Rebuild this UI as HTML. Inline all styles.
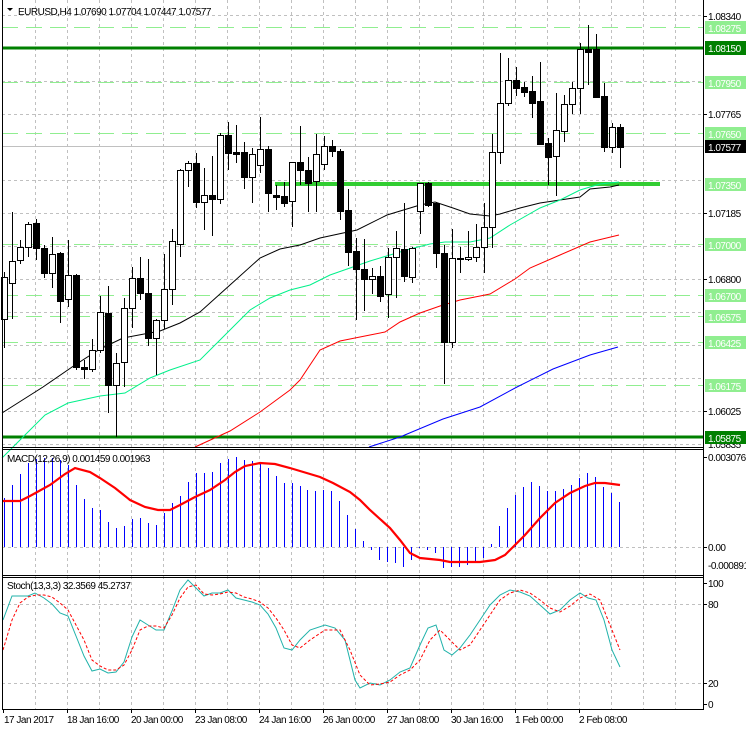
<!DOCTYPE html>
<html><head><meta charset="utf-8"><style>
html,body{margin:0;padding:0;background:#fff;}
svg{display:block;font-family:"Liberation Sans",sans-serif;}
text{font-size:10px;letter-spacing:-0.5px;}
</style></head><body>
<svg width="746" height="731" viewBox="0 0 746 731" xmlns="http://www.w3.org/2000/svg">
<rect width="746" height="731" fill="#fff"/>
<g stroke="#c0c0c0" stroke-dasharray="3,3" stroke-width="1">
<path d="M35.5 0V709M67.5 0V709M99.5 0V709M131.5 0V709M163.5 0V709M195.5 0V709M227.5 0V709M259.5 0V709M291.5 0V709M323.5 0V709M355.5 0V709M387.5 0V709M419.5 0V709M451.5 0V709M483.5 0V709M515.5 0V709M547.5 0V709M579.5 0V709M611.5 0V709M643.5 0V709M675.5 0V709"/>
<path d="M2 15.5H703M2 114.5H703M2 213.5H703M2 246.5H703M2 279.5H703M2 312.5H703M2 345.5H703M2 378.5H703M2 411.5H703M2 444.5H703M2 180.5H703M2 81.5H703"/>
<path d="M2 547.5H703M2 604.5H703M2 683.5H703"/>
</g>
<g stroke="#90ee90" stroke-width="1" stroke-dasharray="16,8">
<path d="M2 27.5H703M2 82.5H703M2 133.5H703M2 244.5H703M2 295.5H703M2 316.5H703M2 342.5H703M2 385.5H703"/>
</g>
<path d="M2 146.5H703" stroke="#c0c0c0" stroke-width="1"/>
<path d="M2 48H703M2 437H703" stroke="#008000" stroke-width="3"/>
<path d="M275 184H660" stroke="#32cd32" stroke-width="4"/>
<polyline fill="none" stroke="#000" stroke-width="1" points="2,413 43,387 75,365 100,349 123,338 160,331 180,323 200,312 230,285 260,258 280,249 300,245 320,238 357,230 387,215 420,205 435,202 453,208 470,214 490,216 500,214 520,208 540,203 560,200 580,197 590,189 610,187 619,185"/>
<polyline fill="none" stroke="#00f08a" stroke-width="1" points="2,458 20,440 45,415 68,403 100,396 125,393 150,378 170,370 200,360 220,340 250,310 270,298 290,290 310,285 330,275 350,268 370,261 390,255 410,249 430,244 445,242 470,242 490,238 510,225 540,208 560,200 580,190 600,184 619,182"/>
<polyline fill="none" stroke="#ff0000" stroke-width="1" points="195,447 230,431 260,412 290,390 300,380 320,350 340,341 370,335 385,332 400,322 420,313 440,306 460,300 490,294 515,279 530,268 560,255 590,242 619,235"/>
<polyline fill="none" stroke="#0000ff" stroke-width="1" points="369,447 400,437 443,419 480,407 517,387 553,369 590,355 618,347"/>
<path stroke="#000" stroke-width="1" fill="none" d="M4.5 272V348M12.5 212V319M20.5 240V264M28.5 222V257M36.5 219V260M44.5 245V278M52.5 237V288M60.5 252V323M68.5 240V307M76.5 274V370M84.5 360V379M92.5 339V372M100.5 296V353M108.5 286V413M116.5 353V437M124.5 298V387M132.5 267V328M140.5 257V300M148.5 259V346M156.5 319V375M164.5 254V329M172.5 229V305M180.5 169V257M188.5 161V187M196.5 153V208M204.5 168V230M212.5 156V236M220.5 133V204M228.5 122V170M236.5 125V163M244.5 142V189M252.5 148V203M260.5 117V173M268.5 146V212M276.5 185V210M284.5 182V207M292.5 162V227M300.5 126V185M308.5 157V212M316.5 134V212M324.5 136V170M332.5 140V157M340.5 149V220M348.5 189V266M356.5 238V320M364.5 239V311M372.5 268V294M380.5 266V302M388.5 248V318M396.5 231V298M404.5 203V282M412.5 247V283M420.5 183V234M428.5 182V207M436.5 202V268M444.5 245V384M452.5 229V348M460.5 247V273M468.5 231V261M476.5 224V262M484.5 203V273M492.5 134V248M500.5 53V164M508.5 58V106M516.5 67V96M524.5 82V97M532.5 76V118M540.5 62V144M548.5 138V185M556.5 93V196M564.5 95V142M572.5 82V114M580.5 43V114M588.5 25V85M596.5 34V97M604.5 83V152M612.5 123V153M620.5 124V168"/>
<g fill="#fff" stroke="#000" stroke-width="1">
<rect x="1.5" y="277.5" width="6" height="42"/>
<rect x="9.5" y="261.5" width="6" height="22"/>
<rect x="17.5" y="247.5" width="6" height="13"/>
<rect x="25.5" y="224.5" width="6" height="23"/>
<rect x="49.5" y="254.5" width="6" height="19"/>
<rect x="65.5" y="275.5" width="6" height="24"/>
<rect x="89.5" y="350.5" width="6" height="19"/>
<rect x="97.5" y="312.5" width="6" height="38"/>
<rect x="113.5" y="363.5" width="6" height="22"/>
<rect x="121.5" y="308.5" width="6" height="54"/>
<rect x="129.5" y="278.5" width="6" height="30"/>
<rect x="153.5" y="320.5" width="6" height="18"/>
<rect x="161.5" y="289.5" width="6" height="31"/>
<rect x="169.5" y="241.5" width="6" height="48"/>
<rect x="177.5" y="170.5" width="6" height="74"/>
<rect x="185.5" y="163.5" width="6" height="7"/>
<rect x="201.5" y="195.5" width="6" height="7"/>
<rect x="217.5" y="135.5" width="6" height="64"/>
<rect x="249.5" y="154.5" width="6" height="23"/>
<rect x="257.5" y="149.5" width="6" height="16"/>
<rect x="289.5" y="162.5" width="6" height="39"/>
<rect x="313.5" y="154.5" width="6" height="27"/>
<rect x="321.5" y="146.5" width="6" height="18"/>
<rect x="369.5" y="276.5" width="6" height="3"/>
<rect x="385.5" y="257.5" width="6" height="37"/>
<rect x="393.5" y="248.5" width="6" height="9"/>
<rect x="409.5" y="248.5" width="6" height="29"/>
<rect x="417.5" y="183.5" width="6" height="28"/>
<rect x="449.5" y="258.5" width="6" height="84"/>
<rect x="465.5" y="257.5" width="6" height="2"/>
<rect x="473.5" y="247.5" width="6" height="10"/>
<rect x="481.5" y="227.5" width="6" height="20"/>
<rect x="489.5" y="152.5" width="6" height="75"/>
<rect x="497.5" y="103.5" width="6" height="49"/>
<rect x="505.5" y="80.5" width="6" height="23"/>
<rect x="553.5" y="130.5" width="6" height="26"/>
<rect x="561.5" y="104.5" width="6" height="27"/>
<rect x="569.5" y="88.5" width="6" height="16"/>
<rect x="577.5" y="49.5" width="6" height="39"/>
<rect x="609.5" y="127.5" width="6" height="20"/>
</g>
<g fill="#000" stroke="#000" stroke-width="1">
<rect x="33.5" y="223.5" width="6" height="25"/>
<rect x="41.5" y="248.5" width="6" height="25"/>
<rect x="57.5" y="253.5" width="6" height="48"/>
<rect x="73.5" y="275.5" width="6" height="92"/>
<rect x="81.5" y="367.5" width="6" height="2"/>
<rect x="105.5" y="313.5" width="6" height="72"/>
<rect x="137.5" y="278.5" width="6" height="15"/>
<rect x="145.5" y="293.5" width="6" height="45"/>
<rect x="193.5" y="163.5" width="6" height="39"/>
<rect x="209.5" y="195.5" width="6" height="4"/>
<rect x="225.5" y="135.5" width="6" height="18"/>
<rect x="233.5" y="152.5" width="6" height="2"/>
<rect x="241.5" y="152.5" width="6" height="25"/>
<rect x="265.5" y="149.5" width="6" height="44"/>
<rect x="273.5" y="195.5" width="6" height="2"/>
<rect x="281.5" y="196.5" width="6" height="7"/>
<rect x="297.5" y="162.5" width="6" height="8"/>
<rect x="305.5" y="170.5" width="6" height="13"/>
<rect x="329.5" y="146.5" width="6" height="5"/>
<rect x="337.5" y="151.5" width="6" height="60"/>
<rect x="345.5" y="210.5" width="6" height="42"/>
<rect x="353.5" y="251.5" width="6" height="18"/>
<rect x="361.5" y="269.5" width="6" height="10"/>
<rect x="377.5" y="276.5" width="6" height="20"/>
<rect x="401.5" y="249.5" width="6" height="27"/>
<rect x="425.5" y="183.5" width="6" height="22"/>
<rect x="433.5" y="203.5" width="6" height="50"/>
<rect x="441.5" y="253.5" width="6" height="89"/>
<rect x="457.5" y="258.5" width="6" height="1"/>
<rect x="513.5" y="80.5" width="6" height="8"/>
<rect x="521.5" y="87.5" width="6" height="5"/>
<rect x="529.5" y="91.5" width="6" height="12"/>
<rect x="537.5" y="101.5" width="6" height="43"/>
<rect x="545.5" y="143.5" width="6" height="14"/>
<rect x="585.5" y="49.5" width="6" height="3"/>
<rect x="593.5" y="49.5" width="6" height="48"/>
<rect x="601.5" y="96.5" width="6" height="51"/>
<rect x="617.5" y="127.5" width="6" height="20"/>
</g>
<path stroke="#0000ff" fill="none" stroke-width="1" d="M4.5 547V498M12.5 547V485M20.5 547V474M28.5 547V463M36.5 547V459M44.5 547V458M52.5 547V458M60.5 547V460M68.5 547V465M76.5 547V485M84.5 547V499M92.5 547V508M100.5 547V510M108.5 547V522M116.5 547V528M124.5 547V526M132.5 547V519M140.5 547V518M148.5 547V523M156.5 547V525M164.5 547V513M172.5 547V503M180.5 547V496M188.5 547V482M196.5 547V473M204.5 547V473M212.5 547V472M220.5 547V463M228.5 547V459M236.5 547V457M244.5 547V460M252.5 547V461M260.5 547V462M268.5 547V468M276.5 547V476M284.5 547V483M292.5 547V483"/>
<path stroke="#0000ff" fill="none" stroke-width="1" d="M300.5 547V486M307.5 547V490M315.5 547V491M323.5 547V490M331.5 547V491M339.5 547V501M347.5 547V515M355.5 547V529M363.5 547V541M371.5 547V550M379.5 547V560M387.5 547V562M395.5 547V563M403.5 547V567M411.5 547V560M419.5 547V548M427.5 547V550M435.5 547V553M443.5 547V568M451.5 547V567M459.5 547V567M467.5 547V565M475.5 547V561M483.5 547V558M491.5 547V544M499.5 547V526M507.5 547V508M515.5 547V495M523.5 547V487M531.5 547V482M539.5 547V486M547.5 547V491M555.5 547V491M563.5 547V489M571.5 547V485M579.5 547V478M587.5 547V473M595.5 547V477M603.5 547V487M611.5 547V493M619.5 547V502"/>
<polyline fill="none" stroke="#ff0000" stroke-width="2.2" points="3,501 20,501 30,496 50,485 65,474 75,468 90,472 100,478 115,488 130,500 145,507 158,510 170,510 180,505 195,497 210,490 225,480 235,472 245,466 260,463 275,464 290,468 300,471 320,477 333,483 350,492 360,500 370,510 390,528 400,540 410,553 420,558 440,560 450,562 480,562 495,560 505,555 515,545 525,535 540,518 555,503 570,493 585,486 595,483 605,483 620,485"/>
<polyline fill="none" stroke="#20b2aa" stroke-width="1" points="3,620 12,596 20,596 28,596 35,593 44,598 52,604 60,613 68,616 76,636 84,656 92,671 100,669 108,673 116,672 124,662 132,637 140,620 148,625 156,630 164,630 172,611 180,590 188,580 196,588 204,596 212,593 220,593 228,590 236,598 244,600 252,602 260,605 268,614 276,628 284,648 292,650 300,640 310,630 325,625 335,628 345,640 355,680 360,688 370,683 380,685 390,680 400,672 410,668 420,645 428,628 436,625 444,650 452,655 460,648 470,635 480,620 490,605 500,595 510,590 520,592 530,596 540,605 550,614 560,610 570,600 580,593 588,598 596,600 604,620 612,650 620,667"/>
<polyline fill="none" stroke="#ff0000" stroke-width="1" stroke-dasharray="3,2" points="3,650 12,620 20,603 28,597 36,595 44,595 52,597 60,603 68,610 76,625 84,640 92,660 100,666 108,670 116,670 124,665 132,650 140,630 148,626 156,626 164,628 172,615 180,598 188,587 196,585 204,594 212,595 220,594 228,592 236,593 244,597 252,599 260,602 268,608 276,618 284,630 292,645 300,648 310,640 325,630 340,630 350,650 360,675 370,685 380,684 390,682 400,675 410,670 420,660 430,640 440,630 450,640 460,650 470,645 480,630 490,615 500,600 510,593 520,590 530,593 540,600 550,608 560,612 570,606 580,598 590,594 600,600 610,625 620,650"/>
<g stroke="#000" stroke-width="1" fill="none">
<path d="M2.5 0V709.5M703.5 0V709.5M2 447.5H704M2 449.5H704M2 575.5H704M2 577.5H704M2 709.5H704"/>
<path d="M703 16.5H707M703 114.5H707M703 213.5H707M703 279.5H707M703 411.5H707M703 457.5H707M703 547.5H707M703 583.5H707M703 604.5H707M703 683.5H707M703 704.5H707"/>
<path d="M3.5 709V713M67.5 709V713M131.5 709V713M195.5 709V713M259.5 709V713M323.5 709V713M387.5 709V713M451.5 709V713M515.5 709V713M579.5 709V713"/>
</g>
<g>
<text x="708" y="20">1.08340</text>
<text x="708" y="118">1.07765</text>
<text x="708" y="217">1.07185</text>
<text x="708" y="283">1.06800</text>
<text x="708" y="415">1.06025</text>
<text x="708" y="448">1.05835</text>
<text x="708" y="188">1.07380</text>
<text x="708" y="320">1.06605</text>
<text x="708" y="348">1.06420</text>
<text x="708" y="388">1.06230</text>
<g fill="#90ee90">
<rect x="705" y="21" width="41" height="13"/>
<rect x="705" y="76" width="41" height="13"/>
<rect x="705" y="127" width="41" height="13"/>
<rect x="705" y="178" width="41" height="13"/>
<rect x="705" y="238" width="41" height="13"/>
<rect x="705" y="289" width="41" height="13"/>
<rect x="705" y="310" width="41" height="13"/>
<rect x="705" y="336" width="41" height="13"/>
<rect x="705" y="379" width="41" height="13"/>
</g>
<rect x="705" y="41" width="41" height="14" fill="#008000"/>
<rect x="705" y="431" width="41" height="13" fill="#008000"/>
<rect x="705" y="140" width="41" height="13" fill="#000"/>
<g fill="#fff">
<text x="708" y="32">1.08275</text>
<text x="708" y="52">1.08150</text>
<text x="708" y="87">1.07950</text>
<text x="708" y="138">1.07650</text>
<text x="708" y="151">1.07577</text>
<text x="708" y="189">1.07350</text>
<text x="708" y="249">1.07000</text>
<text x="708" y="300">1.06700</text>
<text x="708" y="321">1.06575</text>
<text x="708" y="347">1.06425</text>
<text x="708" y="390">1.06175</text>
<text x="708" y="442">1.05875</text>
</g>
<text x="708" y="461">0.003076</text>
<text x="708" y="551">0.00</text>
<text x="708" y="569">-0.000891</text>
<text x="708" y="587">100</text>
<text x="708" y="608">80</text>
<text x="708" y="687">20</text>
<text x="708" y="708">0</text>
</g>
<path d="M7 8H13L10 11Z" fill="#000"/>
<text x="18" y="15">EURUSD,H4  1.07690 1.07704 1.07447 1.07577</text>
<text x="7" y="462">MACD(12,26,9) 0.001459 0.001963</text>
<text x="7" y="589">Stoch(13,3,3) 32.3569 45.2737</text>
<g>
<text x="4" y="723">17 Jan 2017</text>
<text x="67" y="723">18 Jan 16:00</text>
<text x="131" y="723">20 Jan 00:00</text>
<text x="195" y="723">23 Jan 08:00</text>
<text x="259" y="723">24 Jan 16:00</text>
<text x="323" y="723">26 Jan 00:00</text>
<text x="387" y="723">27 Jan 08:00</text>
<text x="451" y="723">30 Jan 16:00</text>
<text x="515" y="723">1 Feb 00:00</text>
<text x="579" y="723">2 Feb 08:00</text>
</g>
</svg>
</body></html>
